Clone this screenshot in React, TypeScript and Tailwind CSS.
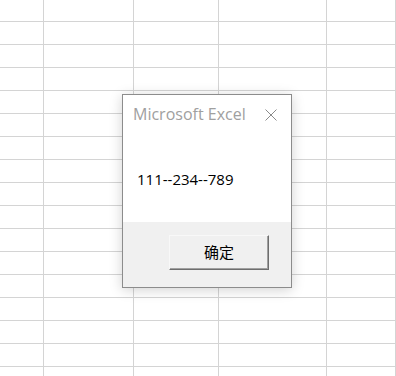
import React from "react";

const COLS = 5;
const ROWS = 17;

function Sheet() {
    const cells = [];
    for (let r = 0; r < ROWS; r++) {
        for (let c = 0; c < COLS; c++) {
            cells.push(<div key={`${r}-${c}`} className="h-[23px] border-b border-r border-[#d4d4d4]" />);
        }
    }
    return (
        <div className="-mt-[1px] grid grid-cols-[44px_90px_85px_108px_1fr]">
            {cells}
        </div>
    );
}

function MsgBox() {
    return (
        <div className="absolute left-[122px] top-[94px] flex h-[194px] w-[170px] flex-col border border-[#8c8c8c] bg-white shadow-[0_2px_12px_rgba(0,0,0,0.18)]">
            {/* title */}
            <div className="flex h-[38px] items-center justify-between pl-[10px] pr-[14px]">
                <span className="text-[16px] text-[#a0a0a0]">Microsoft Excel</span>
                <svg width="12" height="12" viewBox="0 0 12 12" className="mt-[1px]">
                    <path d="M0.5 0.5 L11.5 11.5 M11.5 0.5 L0.5 11.5" stroke="#8a8a8a" strokeWidth="1" fill="none" />
                </svg>
            </div>
            {/* message */}
            <div className="flex flex-1 items-start pl-[14px] pt-[35px]">
                <span className="text-[15px] text-black">111--234--789</span>
            </div>
            {/* footer */}
            <div className="flex h-[65px] items-start justify-end bg-[#f0f0f0] pr-[22px] pt-[13px]">
                <button className="flex h-[35px] w-[100px] items-center justify-center border border-t-[#f8f8f8] border-l-[#f8f8f8] border-r-[#6e6e6e] border-b-[#6e6e6e] bg-[#f0f0f0] text-[15px] text-black shadow-[inset_-1px_-1px_0_#a0a0a0]">
                    确定
                </button>
            </div>
        </div>
    );
}

export default function App() {
    return (
        <div className="relative h-[376px] w-[396px] overflow-hidden bg-white" style={{ fontFamily: '"Open Sans", "Noto Sans CJK SC", sans-serif' }}>
            <Sheet />
            <MsgBox />
        </div>
    );
}
